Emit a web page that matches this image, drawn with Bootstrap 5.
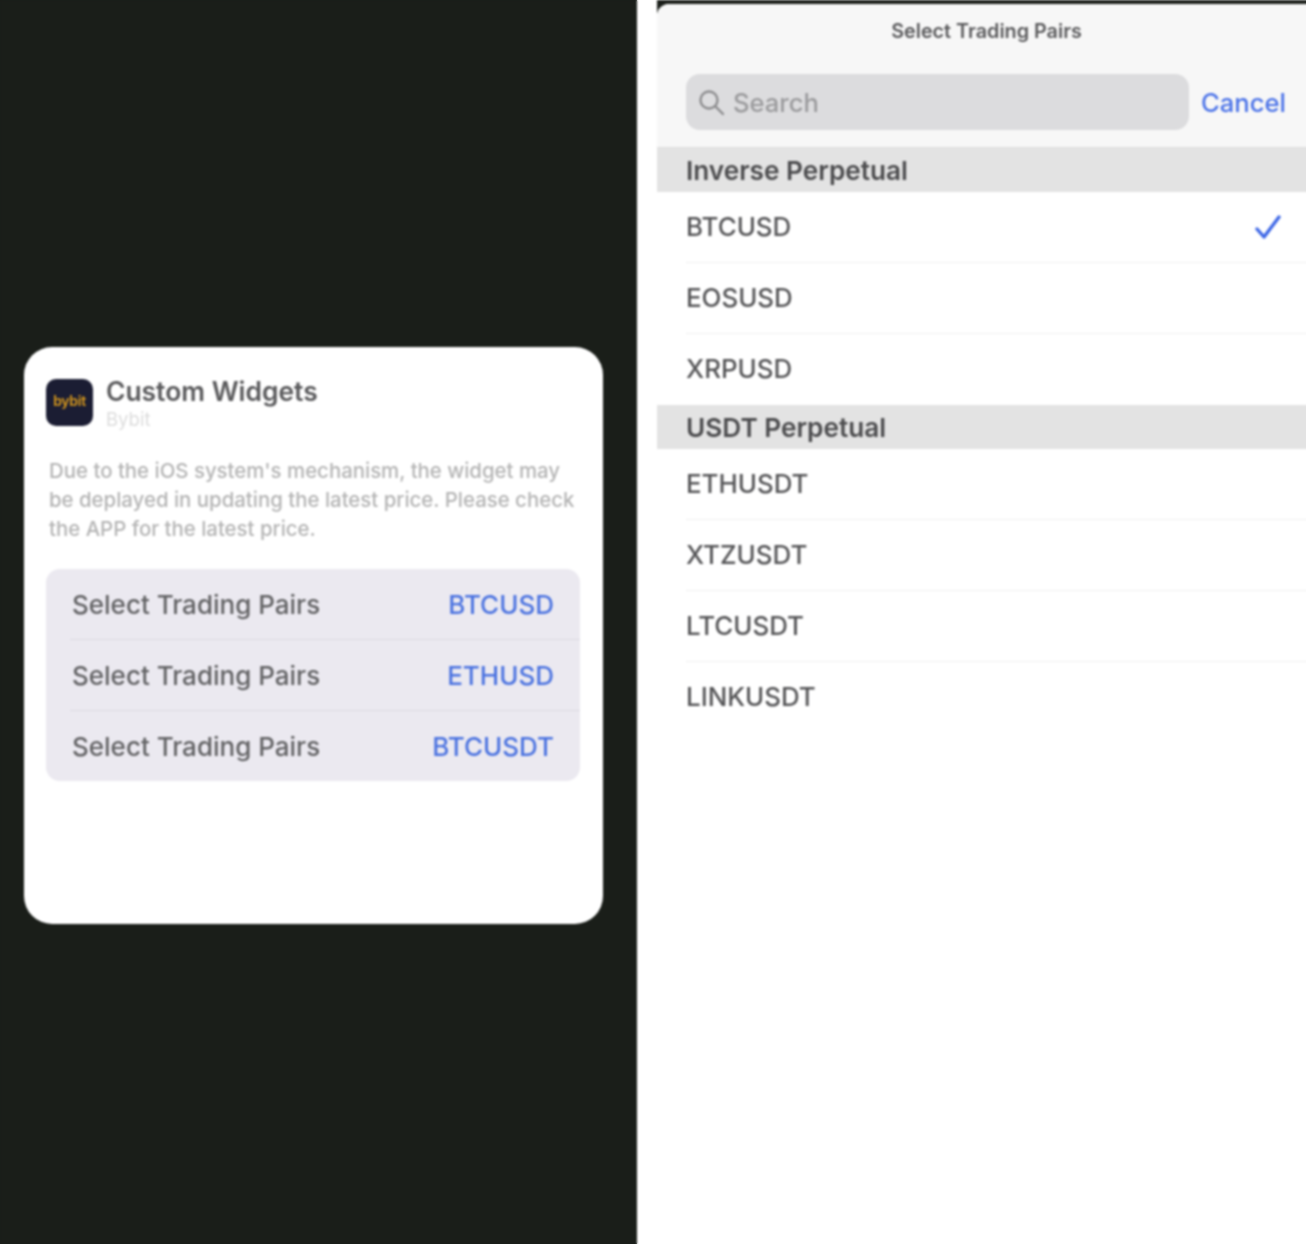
<!DOCTYPE html>
<html lang="en">
<head>
<meta charset="utf-8">
<title>Custom Widgets</title>
<link href="https://cdn.jsdelivr.net/npm/bootstrap@5.3.0/dist/css/bootstrap.min.css" rel="stylesheet">
<style>
html,body{margin:0;height:1244px;overflow:hidden}
html{background:linear-gradient(90deg,#1a1e19 637px,#fff 637px)}
body{font-family:Inter,"Liberation Sans",sans-serif;background:transparent}
.stage{height:1244px;width:1316px;filter:blur(.9px)}
.dark-pane{width:637px;background:#1a1e19;padding:347px 34px 0 24px;flex:none}
.white-gutter{width:20px;flex:none;background:#fff}
.sheet-pane{flex:1;background:#1a1e19;padding-top:4px;min-width:0}
.sheet{height:1240px;background:#fff;border-top-left-radius:12px;overflow:hidden}
.widget-card{height:577px;background:#fff;border-radius:28px;padding:32px 22px 0}
.app-icon{width:47px;height:47px;border-radius:10px;background:#1b1d33;color:#d99a1c;font-size:14px;font-weight:600;letter-spacing:-.3px;padding-bottom:4px;flex:none}
.widget-title{font-size:26.4px;font-weight:600;line-height:30px;color:#5a5a5c;margin:-3px 0 0 1px}
.widget-sub{font-size:18.5px;line-height:22px;color:#dcdcdc;margin:2px 0 0 1px}
.widget-desc{font-size:20.4px;font-weight:500;line-height:29px;color:#b4b4b4;margin:26px 0 26px 3px;white-space:nowrap}
.pair-group{background:#ebe9f0;border-radius:14px;height:212px;width:534px}
.pair-row{height:70px;padding-left:26px;padding-right:26px;font-size:26px;font-weight:500;color:#636365}
.pair-sep{border-top:1px solid #dcdae2;margin-left:24px}
.pair-val{color:#4a72e0}
.sheet-head{height:144px;background:#f7f7f7;border-bottom:1px solid #dedede}
.sheet-title{font-size:19.8px;font-weight:600;line-height:24px;color:#5a5a5c;text-align:center;padding:15px 0 0;height:70px}
.search-row{padding:0 30px 0 29px}
.search-field{width:503px;height:56px;background:#dcdcde;border-radius:14px;padding-left:12px;color:#9b9b9d;font-size:25.6px;font-weight:500;flex:none}
.search-word{padding-top:2px}
.cancel-link{color:#4a72e8;font-size:25.6px;font-weight:500;margin-left:auto;padding-top:2px}
.section-head{height:44px;background:#e3e3e3;padding-left:29px;padding-top:1px;font-size:26.2px;font-weight:600;color:#4c4c4e;line-height:44px}
.pair-item{height:71px;margin-left:29px;padding-right:34px;font-size:25.9px;font-weight:500;color:#555557;border-bottom:1px solid #efefef}
.pair-item.last-item{border-bottom:0}
</style>
</head>
<body>
<div class="stage d-flex">
  <div class="dark-pane">
    <div class="widget-card">
      <div class="d-flex gap-2 align-items-start">
        <div class="app-icon d-flex align-items-center justify-content-center">bybit</div>
        <div class="ms-1">
          <div class="widget-title">Custom Widgets</div>
          <div class="widget-sub">Bybit</div>
        </div>
      </div>
      <div class="widget-desc">Due to the iOS system's mechanism, the widget may<br>be deplayed in updating the latest price. Please check<br>the APP for the latest price.</div>
      <div class="pair-group">
        <div class="pair-row d-flex justify-content-between align-items-center"><span>Select Trading Pairs</span><span class="pair-val">BTCUSD</span></div>
        <div class="pair-sep"></div>
        <div class="pair-row d-flex justify-content-between align-items-center"><span>Select Trading Pairs</span><span class="pair-val">ETHUSD</span></div>
        <div class="pair-sep"></div>
        <div class="pair-row d-flex justify-content-between align-items-center"><span>Select Trading Pairs</span><span class="pair-val">BTCUSDT</span></div>
      </div>
    </div>
  </div>
  <div class="white-gutter"></div>
  <div class="sheet-pane">
    <div class="sheet">
      <div class="sheet-head">
        <div class="sheet-title">Select Trading Pairs</div>
        <div class="search-row d-flex align-items-center">
          <div class="search-field d-flex align-items-center gap-2">
            <svg width="27" height="27" viewBox="0 0 27 27" fill="none" stroke="#8c8c8e" stroke-width="2.4" stroke-linecap="round"><circle cx="11" cy="11" r="8.5"/><path d="M17.5 17.5 25 25"/></svg>
            <span class="search-word">Search</span>
          </div>
          <span class="cancel-link">Cancel</span>
        </div>
      </div>
      <div class="section-head">Inverse Perpetual</div>
      <div class="pair-item d-flex align-items-center justify-content-between"><span>BTCUSD</span>
        <svg width="28" height="26" viewBox="0 0 28 26" fill="none" stroke="#3f68e6" stroke-width="3.4" stroke-linecap="round" stroke-linejoin="round"><path d="M3 15 10 23 25 3"/></svg>
      </div>
      <div class="pair-item d-flex align-items-center"><span>EOSUSD</span></div>
      <div class="pair-item last-item d-flex align-items-center"><span>XRPUSD</span></div>
      <div class="section-head">USDT Perpetual</div>
      <div class="pair-item d-flex align-items-center"><span>ETHUSDT</span></div>
      <div class="pair-item d-flex align-items-center"><span>XTZUSDT</span></div>
      <div class="pair-item d-flex align-items-center"><span>LTCUSDT</span></div>
      <div class="pair-item last-item d-flex align-items-center"><span>LINKUSDT</span></div>
    </div>
  </div>
</div>
<script src="https://cdn.jsdelivr.net/npm/bootstrap@5.3.0/dist/js/bootstrap.bundle.min.js"></script>
</body>
</html>
